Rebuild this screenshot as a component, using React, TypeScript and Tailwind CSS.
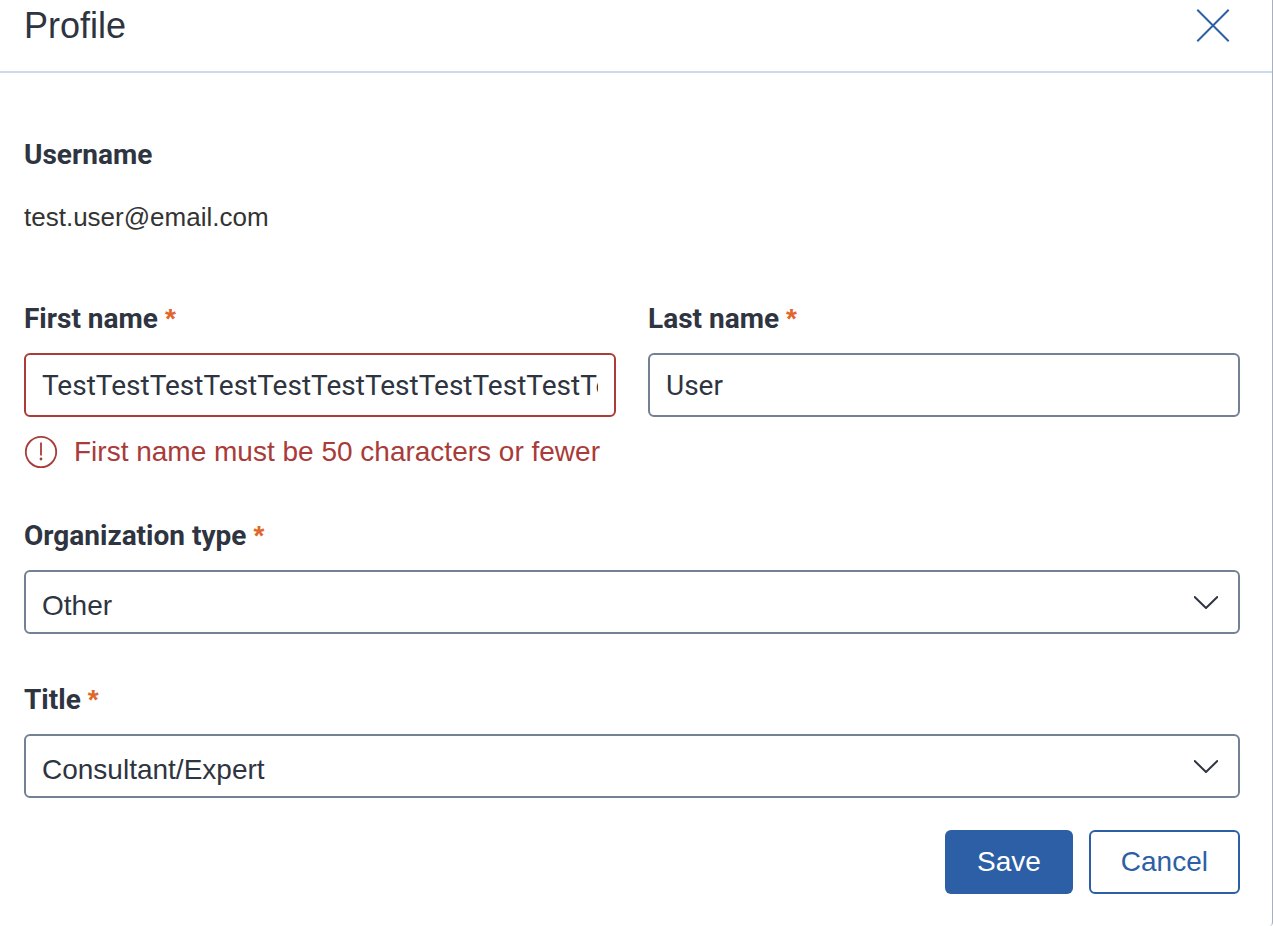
import { useState, type ReactNode } from 'react';

interface FieldLabelProps {
  htmlFor: string;
  children: ReactNode;
}

function FieldLabel({ htmlFor, children }: FieldLabelProps) {
  return (
    <label htmlFor={htmlFor} className="mb-4 block font-['Roboto',sans-serif] text-[28px] leading-9 font-bold">
      {children} <span className="font-['Liberation_Sans',Arial,sans-serif] text-[#e0662b]">*</span>
    </label>
  );
}

interface TextFieldProps {
  id: string;
  label: string;
  value: string;
  onChange: (value: string) => void;
  error?: string;
}

function TextField({ id, label, value, onChange, error }: TextFieldProps) {
  return (
    <div className="min-w-0">
      <FieldLabel htmlFor={id}>{label}</FieldLabel>
      <input
        id={id}
        type="text"
        required
        value={value}
        onChange={(e) => onChange(e.target.value)}
        aria-invalid={!!error}
        aria-describedby={error ? `${id}-error` : undefined}
        className={`block h-16 w-full rounded-md border-2 bg-white px-4 font-['Roboto',sans-serif] text-[28px] ${
          error ? 'border-[#a93b39]' : 'border-[#748094]'
        }`}
      />
      {error && (
        <p id={`${id}-error`} className="mt-[17px] flex items-center gap-4 text-[28px] leading-9 text-[#a93b39]">
          <svg viewBox="0 0 34 34" className="size-[34px] shrink-0" fill="none" aria-hidden="true">
            <circle cx="17" cy="17" r="15.2" stroke="currentColor" strokeWidth="1.8" />
            <path d="M17 7.5v13" stroke="currentColor" strokeWidth="1.8" />
            <circle cx="17" cy="24" r="1.4" fill="currentColor" />
          </svg>
          {error}
        </p>
      )}
    </div>
  );
}

interface SelectFieldProps {
  id: string;
  label: string;
  options: string[];
}

function SelectField({ id, label, options }: SelectFieldProps) {
  return (
    <div>
      <FieldLabel htmlFor={id}>{label}</FieldLabel>
      <div className="relative">
        <select
          id={id}
          required
          className="block h-16 w-full appearance-none rounded-md border-2 border-[#748094] bg-white px-4 pt-2 text-[28px]"
        >
          {options.map((option) => (
            <option key={option}>{option}</option>
          ))}
        </select>
        <svg
          viewBox="0 0 24 14"
          className="pointer-events-none absolute inset-y-0 right-[22px] my-auto h-[14px] w-6"
          fill="none"
          aria-hidden="true"
        >
          <path d="M.7 2 12 13 23.3 2" stroke="#2e3440" strokeWidth="2" strokeLinejoin="round" strokeLinecap="round" />
        </svg>
      </div>
    </div>
  );
}

export default function App() {
  const [firstName, setFirstName] = useState('Test'.repeat(13));
  const [lastName, setLastName] = useState('User');

  return (
    <main className="min-h-screen rounded-br-sm border-r border-[#a9afbb] bg-white font-['Liberation_Sans',Arial,sans-serif] text-[#2e3440]">
      <header className="flex h-[73px] items-start justify-between border-b-2 border-[#d0d9e7] pr-[42px] pl-6">
        <h1 className="pt-1 text-[36px] leading-[44px]">Profile</h1>
        <button type="button" aria-label="Close" className="mt-2 text-[#2c5fa5]">
          <svg viewBox="0 0 34 34" className="size-[34px]" fill="none" aria-hidden="true">
            <path d="M1.3 1.8 32.7 33.2M32.7 1.8 1.3 33.2" stroke="currentColor" strokeWidth="2" />
          </svg>
        </button>
      </header>

      <form className="pt-16 pr-8 pb-8 pl-6" noValidate onSubmit={(e) => e.preventDefault()}>
        <h2 className="font-['Roboto',sans-serif] text-[28px] leading-9 font-bold">Username</h2>
        <p className="mt-[26px] text-[26px] leading-9 text-[#333333]">test.user@email.com</p>

        <div className="mt-[66px] grid grid-cols-2 gap-8">
          <TextField
            id="first-name"
            label="First name"
            value={firstName}
            onChange={setFirstName}
            error={firstName.length > 50 ? 'First name must be 50 characters or fewer' : undefined}
          />
          <TextField id="last-name" label="Last name" value={lastName} onChange={setLastName} />
        </div>

        <div className="mt-12 grid gap-12">
          <SelectField id="organization-type" label="Organization type" options={['Other']} />
          <SelectField id="title" label="Title" options={['Consultant/Expert']} />
        </div>

        <div className="mt-8 flex justify-end gap-4 text-[28px]">
          <button type="submit" className="h-16 rounded-md bg-[#2c5fa5] px-8 text-white">
            Save
          </button>
          <button type="button" className="h-16 rounded-md border-2 border-[#2c5fa5] px-[30px] text-[#2c5fa5]">
            Cancel
          </button>
        </div>
      </form>
    </main>
  );
}
